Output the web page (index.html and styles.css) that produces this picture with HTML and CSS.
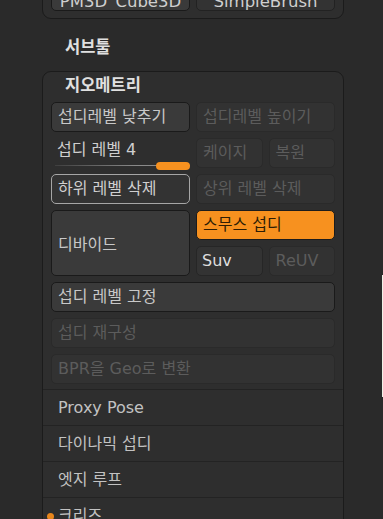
FILE: index.html
```html
<!DOCTYPE html>
<html lang="ko">
<head>
<meta charset="utf-8">
<title>서브툴 - 지오메트리</title>
<link rel="stylesheet" href="styles.css">
</head>
<body>
<div class="app">
  <div class="panel top-panel">
    <div class="btn btn-active">PM3D_Cube3D</div>
    <div class="btn">SimpleBrush</div>
  </div>

  <div class="section-title">서브툴</div>

  <div class="panel geo">
    <div class="panel-head">지오메트리</div>
    <div class="geo-grid">
      <div class="btn btn-active">섭디레벨 낮추기</div>
      <div class="btn disabled">섭디레벨 높이기</div>

      <div class="slider">
        <span class="slider-label">섭디 레벨 4</span>
        <div class="slider-track"><div class="slider-handle"></div></div>
      </div>
      <div class="pair">
        <div class="btn disabled">케이지</div>
        <div class="btn disabled">복원</div>
      </div>

      <div class="btn outlined">하위 레벨 삭제</div>
      <div class="btn disabled">상위 레벨 삭제</div>

      <div class="btn btn-active tall">디바이드</div>
      <div class="btn orange">스무스 섭디</div>
      <div class="pair">
        <div class="btn bright">Suv</div>
        <div class="btn disabled">ReUV</div>
      </div>

      <div class="btn btn-active wide">섭디 레벨 고정</div>
      <div class="btn disabled wide">섭디 재구성</div>
      <div class="btn disabled wide">BPR을 Geo로 변환</div>
    </div>

    <div class="sub-item">Proxy Pose</div>
    <div class="sub-item">다이나믹 섭디</div>
    <div class="sub-item">엣지 루프</div>
    <div class="sub-item marked">크리즈</div>
  </div>
  <div class="edge-strip"></div>
</div>
</body>
</html>
```

FILE: styles.css
```css
* { box-sizing: border-box; }

html {
  margin: 0;
  padding: 0;
  background: #2a2a2a;
  overflow: hidden;
}

body {
  margin: 0;
  padding: 0;
  font-family: "DejaVu Sans", "Noto Sans CJK KR", sans-serif;
  font-size: 16px;
  color: #c8c8c8;
}

.app {
  display: flow-root;
  position: relative;
  width: 383px;
  height: 519px;
  padding-left: 42px;
}

.panel {
  width: 302px;
  border: 1px solid #1b1b1b;
  border-radius: 9px;
  background: #2e2e2e;
}

.top-panel {
  margin-top: -21px;
  display: grid;
  grid-template-columns: 1fr 1fr;
  gap: 6px;
  padding: 0 8px 7px;
}

.top-panel .btn {
  height: 31px;
  line-height: 29px;
  padding: 6px 0 0;
  font-size: 16.5px;
  text-align: center;
  color: #cfcfcf;
}

.section-title {
  padding: 18px 0 12px 23px;
  line-height: 22px;
  font-size: 16.5px;
  font-weight: 700;
  color: #e0e0e0;
}

.panel-head {
  padding: 2px 0 0 22px;
  line-height: 24px;
  font-size: 16.5px;
  font-weight: 700;
  color: #e0e0e0;
}

.geo-grid {
  display: grid;
  grid-template-columns: 1fr 1fr;
  grid-auto-rows: 30px;
  gap: 6px;
  padding: 4px 8px 5px;
}

.btn {
  border: 1px solid #222;
  border-radius: 5px;
  background: #333;
  line-height: 28px;
  padding-left: 6px;
  white-space: nowrap;
  overflow: hidden;
  color: #c8c8c8;
}

.btn-active {
  background: #3a3a3a;
  border-color: #1a1a1a;
}

.disabled {
  background: #323232;
  border-color: #2a2a2a;
  color: #5c5c5c;
}

.outlined {
  border: 1.5px solid #a6a6a6;
  background: #333;
  color: #cfcfcf;
}

.bright { color: #dedede; background: #333; border-color: #262626; padding-left: 5px; }

.orange {
  background: #f7911f;
  border-color: #1c1c1c;
  color: #2e1d05;
}

.tall {
  grid-row: span 2;
  display: flex;
  align-items: center;
  line-height: normal;
}

.wide { grid-column: span 2; }

.pair {
  display: grid;
  grid-template-columns: 1fr 1fr;
  gap: 6px;
}

.slider {
  display: flex;
  flex-direction: column;
  padding-left: 6px;
}

.slider-label {
  line-height: 24px;
  color: #cfcfcf;
}

.slider-track {
  position: relative;
  height: 8px;
  margin-left: -2px;
  background: linear-gradient(to right, rgba(130,130,130,0.2), #8a8a8a 60%) 0 3px / 100% 1px no-repeat;
}

.slider-handle {
  position: absolute;
  right: 0;
  top: 0;
  width: 34px;
  height: 8px;
  border-radius: 4px;
  background: #f7911f;
}

.sub-item {
  position: relative;
  height: 36px;
  border-top: 1px solid #232323;
  padding-left: 15px;
  line-height: 35px;
  color: #c2c2c2;
}

.marked::before {
  content: "";
  position: absolute;
  left: 4px;
  top: 15px;
  width: 7px;
  height: 7px;
  border-radius: 50%;
  background: #e8861c;
}

.edge-strip {
  position: absolute;
  right: 0;
  top: 275px;
  width: 1px;
  height: 122px;
  background: #eef0e6;
}
```
